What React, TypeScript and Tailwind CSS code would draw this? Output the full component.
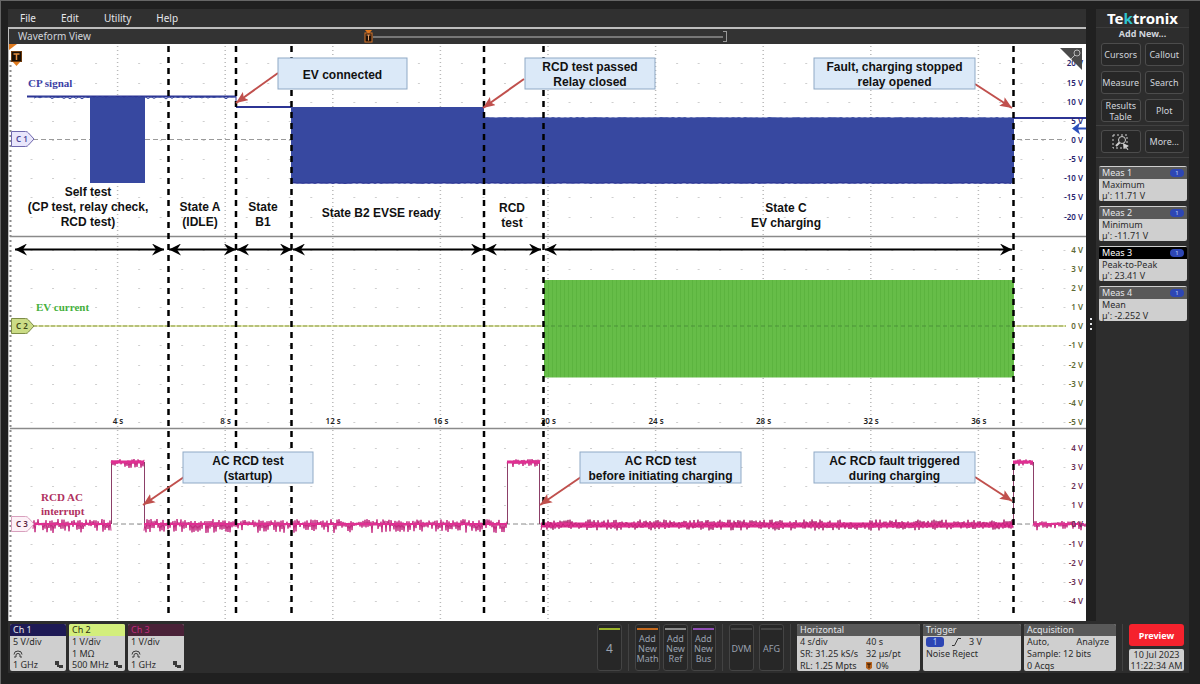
import type { ReactNode } from "react";

const MENU = ["File", "Edit", "Utility", "Help"];

const MEASUREMENTS = [
  { name: "Meas 1", type: "Maximum", value: "µ': 11.71 V", active: false },
  { name: "Meas 2", type: "Minimum", value: "µ': -11.71 V", active: false },
  { name: "Meas 3", type: "Peak-to-Peak", value: "µ': 23.41 V", active: true },
  { name: "Meas 4", type: "Mean", value: "µ': -2.252 V", active: false },
];

const CHANNELS = [
  { name: "Ch 1", head: "bg-[#1e1a55] text-gray-200", scale: "5 V/div", term: null, bw: "1 GHz" },
  { name: "Ch 2", head: "bg-[#d3ee7c] text-[#2b3010]", scale: "1 V/div", term: "1 MΩ", bw: "500 MHz" },
  { name: "Ch 3", head: "bg-[#4a2238] text-[#c02c7c]", scale: "1 V/div", term: null, bw: "1 GHz" },
];

// chart geometry
const LEFT = 10;
const DIV = 21.52;
const MARKERS = [168.5, 236, 291.5, 484, 543.5, 1013.5];

const PANELS = [
  {
    color: "#28256f",
    rows: [63, 83, 102, 121, 140, 159, 178, 197, 217],
    labels: ["20 V", "15 V", "10 V", "5 V", "0 V", "-5 V", "-10 V", "-15 V", "-20 V"],
  },
  {
    color: "#5f6a35",
    rows: [250, 269, 288, 307, 326, 345, 365, 384, 403, 422],
    labels: ["4 V", "3 V", "2 V", "1 V", "0 V", "-1 V", "-2 V", "-3 V", "-4 V", "-5 V"],
  },
  {
    color: "#6b2f55",
    rows: [448, 467, 486, 505, 524, 544, 563, 582, 601],
    labels: ["4 V", "3 V", "2 V", "1 V", "0 V", "-1 V", "-2 V", "-3 V", "-4 V"],
  },
];

const SPANS = [
  [15, 164],
  [169, 236],
  [237, 292],
  [293, 483],
  [485, 541],
  [545, 1012],
];

const CALLOUTS = [
  { x: 278, y: 58, w: 129, lines: ["EV connected"], from: [278, 73], to: [236, 103] },
  { x: 525, y: 58, w: 130, lines: ["RCD test passed", "Relay closed"], from: [524, 79], to: [483, 108] },
  { x: 814, y: 58, w: 161, lines: ["Fault, charging stopped", "relay opened"], from: [975, 84], to: [1012, 108] },
  { x: 183, y: 452, w: 130, lines: ["AC RCD test", "(startup)"], from: [184, 477], to: [143, 505] },
  { x: 580, y: 452, w: 161, lines: ["AC RCD test", "before initiating charging"], from: [581, 477], to: [540, 505] },
  { x: 814, y: 452, w: 161, lines: ["AC RCD fault triggered", "during charging"], from: [975, 477], to: [1012, 501] },
];

const STATES = [
  { x: 88, y: 196, lines: ["Self test", "(CP test, relay check,", "RCD test)"] },
  { x: 200, y: 211, lines: ["State A", "(IDLE)"] },
  { x: 263, y: 211, lines: ["State", "B1"] },
  { x: 381, y: 217, lines: ["State B2 EVSE ready"] },
  { x: 512, y: 212, lines: ["RCD", "test"] },
  { x: 786, y: 212, lines: ["State C", "EV charging"] },
];

function noise(x0: number, x1: number, y: number, up: number, down: number, step = 1) {
  let seed = Math.round(x0 * 31 + y * 7);
  const points: string[] = [];
  for (let x = x0; x <= x1; x += step) {
    seed = (seed * 1103515245 + 12345) % 2147483648;
    const r = seed / 2147483648;
    const dy = points.length % 2 ? -up * r : down * r;
    points.push(`${x},${(y + dy).toFixed(1)}`);
  }
  return points.join(" ");
}

export default function App() {
  return (
    <div className="min-h-screen border-t border-l border-[#666] bg-[#202020] pt-2 pr-[11px] pb-[11px] pl-[7px] font-['Noto_Sans','Open_Sans',sans-serif] text-[9px] leading-[11px] text-gray-300">
      <div className="flex">
        <main className="flex min-w-0 flex-1 flex-col">
          <nav className="flex h-[18px] items-center gap-[25px] bg-[#303030] pl-3 text-[10px]">
            {MENU.map((item) => (
              <button key={item} type="button" className="text-gray-200">
                {item}
              </button>
            ))}
          </nav>
          <section className="border-t-2 border-l border-[#bdbdbd]">
            <header className="flex h-[15px] items-center bg-[#333]">
              <h1 className="w-1/3 pl-[9px] text-[10px]">Waveform View</h1>
              <RecordBar />
            </header>
            <WaveformChart />
          </section>
        </main>
        <div className="flex w-[10px] flex-col items-center justify-center gap-[3px] pt-[18px]">
          <span className="size-[2px] bg-gray-200" />
          <span className="size-[2px] bg-gray-200" />
          <span className="size-[2px] bg-gray-200" />
        </div>
        <Sidebar />
      </div>
      <BottomBar />
    </div>
  );
}

function RecordBar() {
  return (
    <div className="flex w-1/3 items-center">
      <svg viewBox="0 0 9 13" className="-ml-1 h-[13px] w-[9px] shrink-0">
        <path d="M1 0h7L4.500 4z" fill="#e0761c" />
        <rect x="1" y="3" width="7" height="9" fill="#1c1008" stroke="#d9772b" />
        <path d="M2.500 5h4M4.500 5v5.500" stroke="#e8a068" fill="none" />
      </svg>
      <div className="h-[2px] flex-1 bg-[#777]" />
      <div className="h-[11px] w-1 border-y border-r border-[#999]" />
    </div>
  );
}

function WaveformChart() {
  const columns = Array.from({ length: 50 }, (_, i) => LEFT + DIV * i);
  return (
    <svg
      viewBox="9 44 1077 577"
      className="block w-full bg-white font-['Liberation_Sans',Arial,sans-serif]"
      role="img"
      aria-label="Waveforms"
    >
      <defs>
        <marker id="red-head" viewBox="0 0 12 10" refX="12" refY="5" markerWidth="12" markerHeight="10" markerUnits="userSpaceOnUse" orient="auto">
          <path d="M0 0L12 5L0 10L2.500 5z" fill="#c0504d" />
        </marker>
        <marker id="black-head" viewBox="0 0 12 12" refX="12" refY="6" markerWidth="12" markerHeight="12" markerUnits="userSpaceOnUse" orient="auto-start-reverse">
          <path d="M0 0L12 6L0 12L4 6z" fill="#000" />
        </marker>
        <pattern id="cycles" width="4" height="10" patternUnits="userSpaceOnUse">
          <rect width="4" height="10" fill="#66bd48" />
          <rect width="1" height="10" fill="#5cb43f" />
        </pattern>
      </defs>

      {/* graticule */}
      {columns.slice(1).map((x, i) =>
        (i + 1) % 5 === 0 ? (
          <line key={x} x1={x} x2={x} y1="46" y2="620" stroke="#b9b9b9" strokeWidth="1.500" strokeDasharray="1 3" />
        ) : (
          PANELS.map((p) =>
            p.rows.map((y) => <rect key={`${x}-${y}`} x={x - 1} y={y} width="2" height="1" fill="#cfcfcf" />),
          )
        ),
      )}
      <path d="M10.500 60V620" stroke="#8c8c8c" strokeWidth="2" strokeDasharray="2 3" />
      <path d="M10 236.500H1086M10 428.500H1086" stroke="#8a8a8a" strokeWidth="1.500" />

      {/* channel 1 */}
      <path d="M33 139.500H1066" stroke="#9a9a9a" strokeDasharray="5 3" />
      <g fill="#3748a0">
        <rect x="90" y="96" width="55" height="87" />
        <rect x="291" y="107" width="193" height="76.500" />
        <rect x="484" y="117.500" width="530" height="66" />
      </g>
      <g fill="none" stroke="#2c3494" strokeWidth="2">
        <path d="M27 96.500H236M236 107H291M1013 118H1086" />
        <path d="M236 96V107" strokeWidth="1" />
      </g>
      <polyline points={noise(34, 236, 97, 0.5, 2, 3)} fill="none" stroke="#3748a0" strokeWidth="1" />
      <polyline points={noise(484, 1013, 118, 0.5, 1, 3)} fill="none" stroke="#3748a0" strokeWidth="1" />
      <polyline points={noise(291, 1013, 183, 1, 0.5, 3)} fill="none" stroke="#2c3494" strokeWidth="1" />

      {/* channel 2 */}
      <path d="M33 326H1066" stroke="#dfe6a8" strokeWidth="2" />
      <path d="M33 326H1066" stroke="#8d9a4e" strokeDasharray="4 2" />
      <rect x="544" y="280" width="470" height="97.500" fill="url(#cycles)" />
      <path d="M544 326H1013" stroke="#4b9138" strokeDasharray="4 3" />

      {/* channel 3 */}
      <path d="M33 524H1066" stroke="#8a8a8a" strokeDasharray="5 3" />
      <g fill="none" stroke="#c4287f" strokeWidth="1">
        <polyline points={noise(33, 111, 524, 5, 9)} />
        <polyline points={noise(144, 507, 524, 5, 9)} />
        <polyline points={noise(1033, 1086, 524, 3, 7)} />
        <polyline points={noise(111, 144, 462, 3, 6)} />
        <polyline points={noise(507, 540, 462, 3, 5)} />
        <polyline points={noise(1013, 1033, 462, 3, 5)} />
        <path d="M111.500 524V462M144.500 462V524M507.500 524V462M539.500 462V524M1013.500 524V462M1033.500 462V524" stroke="#8c3f68" />
        <g stroke="#e02f92" strokeWidth="2">
          <path d="M33 524H111M144 524H507M1033 524H1084" />
          <path d="M111 462H144M507 462H540M1013 462H1033" strokeWidth="3" />
        </g>
        <polyline points={noise(541, 1013, 524.500, 5, 6)} stroke="#a8266c" />
        <path d="M541 525H1013" stroke="#e02f92" strokeWidth="5" />
        <polyline points={noise(541, 1013, 525, 3, 3, 2)} stroke="#c2267a" />
      </g>

      {/* scale labels */}
      <g className="font-['Noto_Sans',sans-serif] font-semibold" fontSize="8">
        {PANELS.map((p) =>
          p.rows.map((y, i) => (
            <text key={y} x="1083" y={y + 3} textAnchor="end" fill={p.color}>
              {p.labels[i]}
            </text>
          )),
        )}
        {[4, 8, 12, 16, 20, 24, 28, 32, 36].map((s, i) => (
          <text key={s} x={118 + i * DIV * 5} y="424" textAnchor="middle" fill="#222">
            {s} s
          </text>
        ))}
      </g>

      {/* state boundaries */}
      {MARKERS.map((x) => (
        <line key={x} x1={x} x2={x} y1="46" y2="617" stroke="#000" strokeWidth="2.500" strokeDasharray="6 5" />
      ))}
      {SPANS.map(([a, b]) => (
        <line key={a} x1={a} x2={b} y1="249.500" y2="249.500" stroke="#000" strokeWidth="2" markerStart="url(#black-head)" markerEnd="url(#black-head)" />
      ))}

      <g className="font-bold" fontSize="12" textAnchor="middle" fill="#111">
        {STATES.map((s) => (
          <Lines key={s.x} x={s.x} y={s.y} lines={s.lines} />
        ))}
        {CALLOUTS.map((c) => (
          <g key={`${c.x}-${c.y}`}>
            <line x1={c.from[0]} y1={c.from[1]} x2={c.to[0]} y2={c.to[1]} stroke="#c0504d" strokeWidth="2" markerEnd="url(#red-head)" />
            <rect x={c.x} y={c.y} width={c.w} height="31" fill="#dbe9f8" stroke="#8fa9c6" />
            <Lines x={c.x + c.w / 2} y={c.lines.length > 1 ? c.y + 13 : c.y + 21} lines={c.lines} />
          </g>
        ))}
      </g>

      <g className="font-['Liberation_Serif',serif] font-bold" fontSize="11">
        <text x="28" y="87" fill="#3c3fa6">CP signal</text>
        <text x="36" y="311" fill="#45b03c">EV current</text>
        <text x="41" y="501" fill="#b03060">RCD AC</text>
        <text x="41" y="515" fill="#b03060">interrupt</text>
      </g>

      {/* channel handles */}
      <ChannelHandle y={139} label="C 1" fill="#e9e6fb" stroke="#6f68ad" color="#4a4496" />
      <ChannelHandle y={326} label="C 2" fill="#cbdc86" stroke="#7d8c47" color="#3d4716" />
      <ChannelHandle y={524} label="C 3" fill="#fdf1f7" stroke="#d8a0bd" color="#5b2440" />

      {/* trigger position */}
      <path d="M9 44h8l-8 6z" fill="#e07b1f" />
      <path d="M12 61h9l-4.500 5z" fill="#e07b1f" />
      <rect x="11.500" y="51.500" width="10" height="10" fill="#160d05" stroke="#6d3a0e" />
      <path d="M13.500 54h6M16.500 54v6" stroke="#e58d3f" strokeWidth="1.500" fill="none" />

      {/* trigger level */}
      <path d="M1086 128.500h-8" stroke="#2c4fbb" strokeWidth="2" />
      <path d="M1072 128.500l8-6-2 6 2 6z" fill="#2c4fbb" />

      {/* zoom corner */}
      <path d="M1060 48h22v22z" fill="#4a4a4a" />
      <circle cx="1077" cy="53" r="3" fill="none" stroke="#b5b5b5" />
      <path d="M1075 55l-4 4" stroke="#b5b5b5" />
    </svg>
  );
}

function Lines({ x, y, lines }: { x: number; y: number; lines: string[] }) {
  return (
    <>
      {lines.map((line, i) => (
        <text key={line} x={x} y={y + i * 15}>
          {line}
        </text>
      ))}
    </>
  );
}

interface ChannelHandleProps {
  y: number;
  label: string;
  fill: string;
  stroke: string;
  color: string;
}

function ChannelHandle({ y, label, fill, stroke, color }: ChannelHandleProps) {
  return (
    <g>
      <path d={`M11.500 ${y - 7.5}h14q2 0 3 1.500l5.500 6-5.500 6q-1 1.500-3 1.500h-14z`} fill={fill} stroke={stroke} />
      <text x="22" y={y + 3} textAnchor="middle" fontSize="8" fill={color} className="font-['Noto_Sans',sans-serif] font-semibold">
        {label}
      </text>
    </g>
  );
}

function Sidebar() {
  return (
    <aside className="w-[93px] shrink-0 bg-[#2d2d2d]">
      <div className="flex h-[18px] items-center justify-center text-[15px] font-bold text-white">
        <span>
          Te<span className="text-[#2fc4cf]">k</span>tronix
        </span>
      </div>
      <h2 className="border-t border-[#3c3c3c] text-center text-[9px] leading-[11px] font-bold">Add New...</h2>
      <div className="mt-1 grid grid-cols-2 gap-x-1 gap-y-[5px] px-[5px]">
        <AddButton>Cursors</AddButton>
        <AddButton>Callout</AddButton>
        <AddButton>Measure</AddButton>
        <AddButton>Search</AddButton>
        <AddButton>
          Results
          <br />
          Table
        </AddButton>
        <AddButton>Plot</AddButton>
      </div>
      <div className="mt-[3px] grid grid-cols-2 gap-x-1 border-y border-[#404040] px-[5px] py-1">
        <AddButton label="Zoom to area">
          <svg viewBox="0 0 18 16" className="h-4 w-[18px]" fill="none" stroke="#d0d0d0">
            <rect x="1" y="1" width="14" height="13" strokeDasharray="2 2" />
            <circle cx="10" cy="6" r="3.500" fill="#2a2a2a" />
            <path d="M7.500 8.500L4 12" strokeWidth="2" />
            <path d="M11 9l6 3-2.500 1 2 2.500-1 .5-2-2.500-2 1.500z" fill="#d0d0d0" stroke="none" />
          </svg>
        </AddButton>
        <AddButton>More...</AddButton>
      </div>
      <div className="mt-2 flex flex-col gap-[5px] pr-[2px] pl-[3px]">
        {MEASUREMENTS.map((m) => (
          <button key={m.name} type="button" className="h-[35px] overflow-hidden rounded-[2px] bg-[#cfcfcf] text-left text-[#2b2b2b]">
            <span
              className={`flex h-3 items-center justify-between px-[3px] ${m.active ? "bg-black text-white" : "bg-[#595959] text-gray-200"}`}
            >
              {m.name}
              <span className="h-2 w-[14px] rounded-full bg-[#2d46b4] text-center text-[6px] leading-[8px] text-blue-200">1</span>
            </span>
            <span className="block px-[3px]">{m.type}</span>
            <span className="block px-[3px]">{m.value}</span>
          </button>
        ))}
      </div>
    </aside>
  );
}

function AddButton({ children, label }: { children: ReactNode; label?: string }) {
  return (
    <button
      type="button"
      aria-label={label}
      className="flex h-[23px] items-center justify-center rounded-[3px] border border-[#4c4c4c] bg-[#272727] text-center leading-[11px] text-gray-300"
    >
      {children}
    </button>
  );
}

function BottomBar() {
  return (
    <footer className="flex h-[52px] items-start bg-[#2d2d2d] pt-[3px] pr-[5px] pl-[2px]">
      <div className="mr-auto flex gap-[3px]">
        {CHANNELS.map((c) => (
          <button key={c.name} type="button" className="flex h-[47px] w-14 flex-col overflow-hidden rounded-[2px] bg-[#cfcfcf] text-left text-[#2b2b2b]">
            <span className={`h-3 w-full px-[3px] leading-3 ${c.head}`}>{c.name}</span>
            <span className="px-[3px] leading-3">{c.scale}</span>
            <span className="flex h-[11px] items-center px-[3px]">{c.term ?? <ProbeIcon />}</span>
            <span className="flex w-full items-center justify-between px-[3px] leading-3">
              {c.bw}
              <svg viewBox="0 0 8 8" className="size-2" fill="#3a3a3a">
                <path d="M0 0h4v4h-4zM4 4h4v3h-4zM2 4h2v2h-2z" />
              </svg>
            </span>
          </button>
        ))}
      </div>

      <ToolButton accent="bg-[#9bb32c]">
        <span className="text-[12px]">4</span>
      </ToolButton>
      <Divider />
      <div className="flex gap-[3px]">
        <ToolButton accent="bg-[#c46a1e]">Add New Math</ToolButton>
        <ToolButton accent="bg-[#8c8c8c]">Add New Ref</ToolButton>
        <ToolButton accent="bg-[#8f4fb5]">Add New Bus</ToolButton>
      </div>
      <Divider />
      <div className="flex gap-[5px]">
        <ToolButton accent="bg-[#444]">DVM</ToolButton>
        <ToolButton accent="bg-[#444]">AFG</ToolButton>
      </div>
      <Divider />

      <div className="flex gap-[3px]">
        <InfoBadge title="Horizontal" width="w-[123px]">
          <span className="grid grid-cols-[66px_1fr] leading-3 whitespace-nowrap">
            <span>4 s/div</span>
            <span>40 s</span>
            <span>SR: 31.25 kS/s</span>
            <span>32 µs/pt</span>
            <span>RL: 1.25 Mpts</span>
            <span className="flex items-center gap-1">
              <svg viewBox="0 0 6 8" className="h-2 w-[6px]">
                <path d="M0 0h6v6l-3 2-3-2z" fill="#b5621d" />
                <path d="M1 2h4M3 2v4" stroke="#2a1404" />
              </svg>
              0%
            </span>
          </span>
        </InfoBadge>
        <InfoBadge title="Trigger" width="w-[98px]">
          <span className="flex items-center gap-2 leading-3">
            <span className="h-[10px] w-[18px] rounded-[3px] bg-[#2d46b4] text-center text-[8px] leading-[10px] text-blue-200">1</span>
            <svg viewBox="0 0 9 8" className="h-2 w-[9px]" fill="none" stroke="#333">
              <path d="M0 7.500h2.500L6 .5h3" />
            </svg>
            3 V
          </span>
          <span className="block leading-3">Noise Reject</span>
        </InfoBadge>
        <InfoBadge title="Acquisition" width="w-[92px]">
          <span className="flex justify-between pr-1 leading-3">
            <span>Auto,</span>
            <span>Analyze</span>
          </span>
          <span className="block leading-3">Sample: 12 bits</span>
          <span className="block leading-3">0 Acqs</span>
        </InfoBadge>
      </div>
      <Divider />

      <div className="flex w-[55px] flex-col gap-[3px] text-center">
        <button type="button" className="h-[22px] rounded-[3px] bg-[#f5222d] font-bold text-white">
          Preview
        </button>
        <p className="h-[22px] rounded-[2px] bg-[#cfcfcf] whitespace-nowrap text-[#2b2b2b]">
          10 Jul 2023
          <br />
          11:22:34 AM
        </p>
      </div>
    </footer>
  );
}

function ProbeIcon() {
  return (
    <svg viewBox="0 0 10 8" className="h-2 w-[10px]" fill="none" stroke="#3a3a3a">
      <path d="M1 4.500Q1 1 5 1T9 4.500M3 7V5Q3 3.500 5 3.500T7 5V7M1 7h2M7 7h2" />
    </svg>
  );
}

function Divider() {
  return <div className="mx-[6px] h-[47px] w-px bg-[#424242]" />;
}

function ToolButton({ accent, children }: { accent: string; children: ReactNode }) {
  return (
    <button
      type="button"
      className="flex h-[47px] w-[25px] flex-col items-center rounded-[3px] border border-[#444] bg-[#272727] px-px pt-[3px] pb-[2px] text-center leading-[10px] text-gray-400"
    >
      <span className={`h-[2px] w-[21px] ${accent}`} />
      <span className="flex flex-1 items-center">{children}</span>
    </button>
  );
}

interface InfoBadgeProps {
  title: string;
  width: string;
  children: ReactNode;
}

function InfoBadge({ title, width, children }: InfoBadgeProps) {
  return (
    <button type="button" className={`flex h-[47px] flex-col overflow-hidden rounded-[2px] bg-[#cfcfcf] text-left text-[#2b2b2b] ${width}`}>
      <span className="h-3 w-full bg-[#595959] px-[3px] leading-3 text-gray-200">{title}</span>
      <span className="block w-full px-[3px]">{children}</span>
    </button>
  );
}
